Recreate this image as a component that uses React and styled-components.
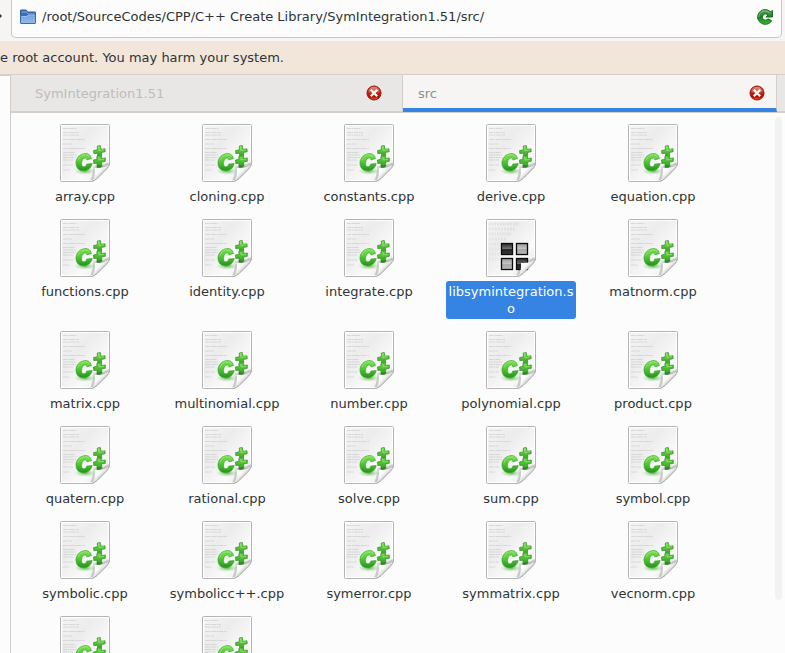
import React from "react";
import styled, { createGlobalStyle, css } from "styled-components";

const GlobalStyle = createGlobalStyle`
  * { box-sizing: border-box; }
  body {
    margin: 0;
    overflow: hidden;
    background: #fcfcfc;
    color: #2e3436;
    font: 13px/17px "DejaVu Sans", sans-serif;
  }
  button, input { font: inherit; color: inherit; }
  button { border: 0; padding: 0; background: none; cursor: pointer; }
`;

const Window = styled.div`
  display: flex;
  flex-direction: column;
  height: 100vh;
  overflow: hidden;
`;

const Toolbar = styled.header`
  display: flex;
  height: 41px;
  padding: 0 3px 3px 0;
  background: #f6f5f4;
`;

const NavButton = styled.button`
  display: flex;
  align-items: center;
  width: 11px;
  flex: none;
  padding-bottom: 6px;
`;

const AddressBar = styled.form`
  display: flex;
  flex: 1;
  align-items: center;
  gap: 6px;
  min-width: 0;
  padding: 0 8px 4px;
  border: 1px solid #cdc7c2;
  border-top: 0;
  border-radius: 0 0 5px 5px;
  background: #fcfcfc;
`;

const AddressInput = styled.input`
  flex: 1;
  min-width: 0;
  height: 22px;
  padding: 0;
  border: 0;
  outline: 0;
  background: none;
`;

const ReloadButton = styled.button`
  display: flex;
  flex: none;
`;

const Banner = styled.p`
  display: flex;
  align-items: center;
  height: 34px;
  flex: none;
  margin: 0;
  background: #f2e6db;
  border-bottom: 1px solid #d6cec8;
`;

const Body = styled.div`
  display: flex;
  flex: 1;
  min-height: 0;
`;

const SidePane = styled.aside`
  width: 11px;
  flex: none;
  border-top: 1px solid #d6d0cc;
  border-right: 1px solid #d0ccc9;
`;

const Main = styled.main`
  display: flex;
  flex: 1;
  flex-direction: column;
  min-width: 0;
`;

const TabBar = styled.div`
  display: grid;
  grid-template-columns: 392fr 374fr 8px;
  height: 38px;
  flex: none;
  border-bottom: 1px solid #d5cfca;
  background: #e8e7e5;
`;

const Tab = styled.div`
  display: flex;
  align-items: center;
  justify-content: space-between;
  padding: 0 20px 0 24px;
  border-right: 1px solid #d5cfca;
  border-bottom: 1px solid #d5cfca;
  color: #bcbdbc;
  ${(p) =>
    p.$active &&
    css`
      padding: 3px 11px 0 15px;
      border-bottom: 4px solid #3584e4;
      background: #f6f5f4;
      color: #8d9091;
    `}
`;

const TabTitle = styled.button`
  flex: 1;
  text-align: left;
`;

const CloseButton = styled.button`
  display: flex;
`;

const TabSpace = styled.div`
  border-bottom: 1px solid #d5cfca;
`;

const FilePane = styled.section`
  position: relative;
  flex: 1;
  min-height: 0;
  overflow: hidden;
`;

const FileGrid = styled.ul`
  display: grid;
  grid-template-columns: repeat(auto-fill, 130px);
  gap: 12px;
  margin: 0;
  padding: 11px 9px;
  list-style: none;
`;

const FileItem = styled.li`
  display: flex;
  flex-direction: column;
  align-items: center;
  gap: 4px;
`;

const FileName = styled.span`
  width: 100%;
  padding: 2px;
  border-radius: 3px;
  text-align: center;
  overflow-wrap: anywhere;
  ${(p) =>
    p.$selected &&
    css`
      background: #3584e4;
      color: #fff;
    `}
`;

const ScrollThumb = styled.div`
  position: absolute;
  top: 4px;
  right: 3px;
  bottom: 53px;
  width: 7px;
  border-radius: 4px;
  background: #f2f2f2;
`;

function Defs() {
  return (
    <svg width="0" height="0" display="block" aria-hidden="true">
      <defs>
        <linearGradient id="paper" x1="0" y1="0" x2="1" y2="1">
          <stop offset="0" stopColor="#f5f5f5" />
          <stop offset="0.35" stopColor="#ececec" />
          <stop offset="0.7" stopColor="#fafafa" />
          <stop offset="1" stopColor="#dedede" />
        </linearGradient>
        <linearGradient id="curl" gradientUnits="userSpaceOnUse" x1="36" y1="44" x2="43" y2="51">
          <stop offset="0" stopColor="#ffffff" />
          <stop offset="0.45" stopColor="#fafafa" />
          <stop offset="1" stopColor="#c4c4c4" />
        </linearGradient>
        <linearGradient id="shade" x1="1" y1="1" x2="0.1" y2="0.1">
          <stop offset="0" stopColor="#000" stopOpacity="0.3" />
          <stop offset="1" stopColor="#000" stopOpacity="0.08" />
        </linearGradient>
        <linearGradient id="green" gradientUnits="userSpaceOnUse" x1="0" y1="29" x2="0" y2="47">
          <stop offset="0" stopColor="#7ee454" />
          <stop offset="0.45" stopColor="#55cb39" />
          <stop offset="1" stopColor="#219218" />
        </linearGradient>
        <linearGradient id="greenPlus" gradientUnits="userSpaceOnUse" x1="0" y1="21" x2="0" y2="44">
          <stop offset="0" stopColor="#86e85a" />
          <stop offset="0.45" stopColor="#3da52b" />
          <stop offset="0.55" stopColor="#62cf40" />
          <stop offset="1" stopColor="#299a1e" />
        </linearGradient>
        <radialGradient id="glow">
          <stop offset="0" stopColor="#3f9c2f" stopOpacity="0.8" />
          <stop offset="1" stopColor="#8fdc7c" stopOpacity="0" />
        </radialGradient>
        <linearGradient id="darkTile" x1="0" y1="0" x2="0" y2="1">
          <stop offset="0" stopColor="#2c2c2c" />
          <stop offset="0.5" stopColor="#777" />
          <stop offset="0.55" stopColor="#222" />
          <stop offset="1" stopColor="#3c3c3c" />
        </linearGradient>
        <linearGradient id="lightTile" x1="0" y1="0" x2="0" y2="1">
          <stop offset="0" stopColor="#999" />
          <stop offset="0.5" stopColor="#c8c8c8" />
          <stop offset="0.55" stopColor="#a8a8a8" />
          <stop offset="1" stopColor="#bbb" />
        </linearGradient>
        <linearGradient id="red" x1="0" y1="0" x2="0" y2="1">
          <stop offset="0" stopColor="#d9705a" />
          <stop offset="0.5" stopColor="#c02410" />
          <stop offset="0.75" stopColor="#b80d00" />
          <stop offset="1" stopColor="#ef5a16" />
        </linearGradient>
        <linearGradient id="folder" x1="0" y1="0" x2="0" y2="1">
          <stop offset="0" stopColor="#6d9fdc" />
          <stop offset="1" stopColor="#93bbe9" />
        </linearGradient>
        <linearGradient id="reload" x1="0" y1="0" x2="0" y2="1">
          <stop offset="0" stopColor="#5cad5c" />
          <stop offset="0.5" stopColor="#1d7e22" />
          <stop offset="1" stopColor="#2fc022" />
        </linearGradient>
      </defs>
    </svg>
  );
}

function Paper({ children }) {
  return (
    <svg width="50" height="58" viewBox="0 0 50 58" aria-hidden="true">
      <path
        d="M1.5.5h47q1 0 1 1V40Q49 42.500 46 45.500L37 54.500q-3 2.500-5.500 3h-30q-1 0-1-1v-55q0-1 1-1Z"
        fill="url(#paper)"
        stroke="#b4b4b4"
      />
      <path d="M32 56.500H1.500V1.500h47V40" fill="none" stroke="#fff" />
      {children}
      <path d="M30 57Q33 52 33 41.500 43 42 49 38V41L35 55Z" fill="url(#shade)" />
      <path d="M31.500 57.500Q35.500 54 35 44 45 44.500 49.500 40 49 42.500 46 45.500L37 54.500q-3 2.500-5.500 3Z" fill="url(#curl)" />
      <path d="M49.500 40Q49 42.500 46 45.500L37 54.500q-3 2.500-5.500 3" fill="none" stroke="#a6a6a6" strokeWidth="0.8" />
    </svg>
  );
}

const codeLines = [
  [4.5, 14], [8.500, 16], [11, 16], [15.500, 22],
  [20, 9], [24.500, 22], [28.500, 12], [31, 13],
  [33.500, 13], [36, 10], [41, 10], [46, 7],
];

function CppIcon() {
  return (
    <Paper>
      {codeLines.map(([y, w]) => (
        <path key={y} d={`M3 ${y}h${w}`} stroke="#c4c4c4" strokeWidth="0.8" strokeDasharray="4 .5 2 .5" opacity="0.7" />
      ))}
      <ellipse cx="25" cy="47" rx="11" ry="4" fill="url(#glow)" />
      <ellipse cx="40" cy="43.500" rx="6" ry="2.500" fill="url(#glow)" />
      <path
        d="M31.500 34.500C30.500 30.500 27.500 28.800 23.500 29.800 18.500 31 15.500 35.500 16 40 16.400 44.500 19.500 47 24 46.700 28.500 46.500 31.500 43.500 32.200 39.500L26.800 40C26.200 42 25 43 23.600 42.700 21.800 42.500 21.300 40.800 21.700 38.200 22 35.800 23.200 34 25 33.900 26.200 33.800 26.800 34.600 26.900 36Z"
        fill="url(#green)"
        stroke="#3aa02b"
        strokeWidth="0.6"
      />
      <path
        d="M37.300 22 40.300 21.500 41 25.300 45 24.800 45.200 27.700 41.400 28.500 41.700 31 41.500 34.500 45.300 34 45.300 37.300 41.600 38 41.800 42 38.500 44 37 43 37 39.300 33.800 39.500 33.500 36 37 35.200 36.800 33 37.700 31 37.400 29.300 33.800 29.600 33.600 26.600 37.400 25.700Z"
        fill="url(#greenPlus)"
        stroke="#2f8d24"
        strokeWidth="0.7"
      />
      <path d="M18 36.500q1.500-5 6-5.700 4-.5 5.500 2M38.500 22.500l.5 4 5-.8M38.800 33l.3 3 5-.8" fill="none" stroke="#a4f57e" strokeWidth="0.8" opacity="0.7" />
    </Paper>
  );
}

function Tile({ x, y, dark }) {
  return (
    <g>
      <rect x={x + 0.5} y={y + 0.5} width="11" height="11" fill={dark ? "url(#darkTile)" : "url(#lightTile)"} stroke="#0c0c0c" strokeWidth="1.3" />
    </g>
  );
}

function LibraryIcon() {
  return (
    <Paper>
      {[5, 10, 15, 20, 25, 30, 35, 40].map((y, i) => (
        <path key={y} d={`M3 ${y}h${i < 4 ? 30 - i * 4 : 10}`} stroke="#c8c8c8" strokeWidth="3" strokeDasharray={i % 2 ? ".7 .8 .5 1" : ".6 1 .8 .8"} opacity={0.55 - i * 0.04} />
      ))}
      <Tile x={15} y={24} dark />
      <Tile x={30} y={24} />
      <Tile x={15} y={39} />
      <Tile x={30} y={39} dark />
    </Paper>
  );
}

function FolderIcon() {
  return (
    <svg width="16" height="16" viewBox="0 0 16 16" aria-hidden="true">
      <path d="M.5 13V1.500q0-.5.500-.5h5q.5 0 .7.500l.8 1.500h7.500q.5 0 .5.500V13Z" fill="#3b6fb4" stroke="#2d5d9f" />
      <path d="M1.500 3h5l1 1.500h7" fill="none" stroke="#82ace0" />
      <path d="M.5 6.500h6l1.500-1.500h7.500v9q0 .5-.5.500H1q-.5 0-.5-.5Z" fill="url(#folder)" stroke="#3a6cb0" />
      <path d="M1.500 7.500h5.500l1.500-1.500h6" fill="none" stroke="#a9c9ef" strokeWidth="0.7" />
    </svg>
  );
}

function ReloadIcon() {
  return (
    <svg width="16" height="16" viewBox="0 0 16 16" aria-hidden="true">
      <path
        d="M15.500 1.500V8H9l2-2.200C9.500 4.600 7.500 4.600 6.200 6 5 7.500 5.300 9.500 6.500 10.500 8 11.600 10 11.200 11 9.800l3.700 2C12.500 15 9 16 5.800 14.900 2 13.500 0 10 .8 6.500 1.600 3 4.500.600 8 .6c2 0 3.800.7 5.200 2.200Z"
        fill="url(#reload)"
        stroke="#11601a"
        strokeWidth="0.9"
      />
      <path d="M2 8C2 4.500 4.500 2 8 2c2 0 3.500.700 5 2.500" fill="none" stroke="#b4e0b0" strokeWidth="0.8" opacity="0.7" />
    </svg>
  );
}

function CloseIcon() {
  return (
    <svg width="16" height="16" viewBox="0 0 16 16" aria-hidden="true">
      <circle cx="8" cy="8" r="7" fill="url(#red)" stroke="#941308" />
      <path d="M2.500 7A5.500 5 0 0 1 13.500 7Q8 9 2.500 7Z" fill="#fff" opacity="0.22" />
      <path d="m4.800 4.800 6.400 6.400m0-6.400-6.400 6.400" stroke="#fff" strokeWidth="2.200" />
    </svg>
  );
}

const tabs = [{ title: "SymIntegration1.51" }, { title: "src", active: true }];

const files = [
  "array.cpp", "cloning.cpp", "constants.cpp", "derive.cpp", "equation.cpp",
  "functions.cpp", "identity.cpp", "integrate.cpp", "libsymintegration.so", "matnorm.cpp",
  "matrix.cpp", "multinomial.cpp", "number.cpp", "polynomial.cpp", "product.cpp",
  "quatern.cpp", "rational.cpp", "solve.cpp", "sum.cpp", "symbol.cpp",
  "symbolic.cpp", "symbolicc++.cpp", "symerror.cpp", "symmatrix.cpp", "vecnorm.cpp",
  "", "",
];

export default function App() {
  return (
    <Window>
      <GlobalStyle />
      <Defs />
      <Toolbar>
        <NavButton aria-label="Go">
          <svg width="3" height="8" viewBox="0 0 3 8" aria-hidden="true">
            <path d="M-3 0 1 4-3 8" fill="none" stroke="#2e3436" strokeWidth="1.5" />
          </svg>
        </NavButton>
        <AddressBar onSubmit={(e) => e.preventDefault()}>
          <FolderIcon />
          <AddressInput
            aria-label="Location"
            defaultValue="/root/SourceCodes/CPP/C++ Create Library/SymIntegration1.51/src/"
          />
          <ReloadButton type="submit" aria-label="Reload">
            <ReloadIcon />
          </ReloadButton>
        </AddressBar>
      </Toolbar>
      <Banner>e root account. You may harm your system.</Banner>
      <Body>
        <SidePane />
        <Main>
          <TabBar>
            {tabs.map((tab) => (
              <Tab key={tab.title} $active={tab.active}>
                <TabTitle>{tab.title}</TabTitle>
                <CloseButton aria-label={`Close ${tab.title}`}>
                  <CloseIcon />
                </CloseButton>
              </Tab>
            ))}
            <TabSpace />
          </TabBar>
          <FilePane>
            <FileGrid>
              {files.map((name, i) => (
                <FileItem key={i}>
                  {name.endsWith(".so") ? <LibraryIcon /> : <CppIcon />}
                  <FileName $selected={name.endsWith(".so")}>{name}</FileName>
                </FileItem>
              ))}
            </FileGrid>
            <ScrollThumb />
          </FilePane>
        </Main>
      </Body>
    </Window>
  );
}
